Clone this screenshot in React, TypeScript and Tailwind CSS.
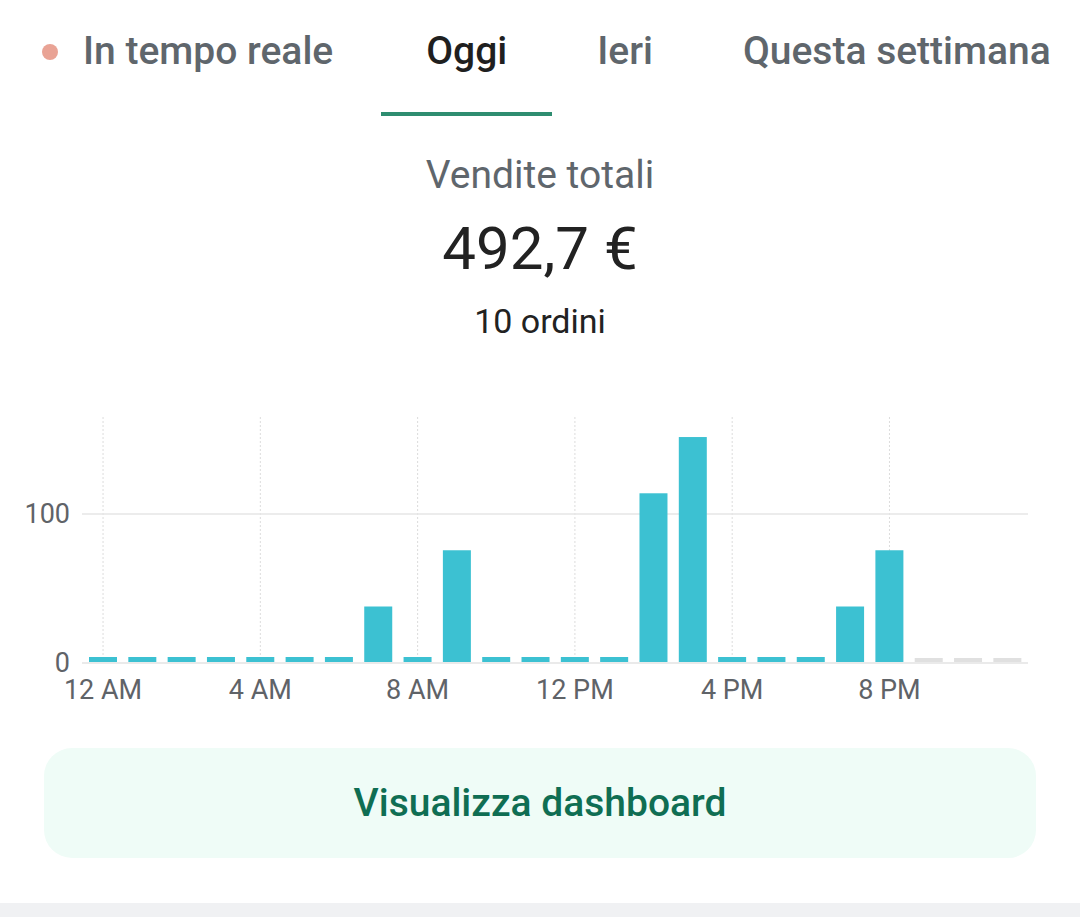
const font = { fontFamily: 'Roboto, "Noto Sans", sans-serif' };

const tabs = [
  { label: 'In tempo reale', live: true },
  { label: 'Oggi', active: true },
  { label: 'Ieri' },
  { label: 'Questa settimana' }
];

// hourly sales for today, null = not reached yet
const sales: (number | null)[] = [
  0, 0, 0, 0, 0, 0, 0, 37.5, 0, 75.5, 0, 0, 0, 0, 114, 152, 0, 0, 0, 37.5, 75.5, null, null, null
];

const X0 = 83.4;
const STEP = 39.32;
const BASE = 262;
const SCALE = 1.48;

const SalesChart = () => (
  <svg width={1080} height={310} viewBox="0 0 1080 310" className="block">
    {[0, 4, 8, 12, 16, 20].map((h) => {
      const x = X0 + (h + 0.5) * STEP;
      return (
        <line
          key={h}
          x1={x}
          x2={x}
          y1={17}
          y2={BASE}
          stroke="#dcdcdc"
          strokeWidth={1}
          strokeDasharray="2 2"
        />
      );
    })}
    <line x1={82} x2={1028} y1={114} y2={114} stroke="#e6e6e6" strokeWidth={1.5} />
    <line x1={82} x2={1028} y1={BASE + 1} y2={BASE + 1} stroke="#e3e3e3" strokeWidth={1.5} />
    {sales.map((v, i) => {
      const x = X0 + i * STEP + 5.6;
      if (v === null)
        return <rect key={i} x={x} y={BASE - 4} width={28} height={4} fill="#e0e0e0" />;
      const h = Math.max(v * SCALE, 5);
      return <rect key={i} x={x} y={BASE - h} width={28} height={h} fill="#3cc1d2" />;
    })}
    <g fill="#5f6368" fontSize={27} style={font}>
      <text x={70} y={123} textAnchor="end">
        100
      </text>
      <text x={70} y={272} textAnchor="end">
        0
      </text>
      {['12 AM', '4 AM', '8 AM', '12 PM', '4 PM', '8 PM'].map((t, k) => (
        <text key={t} x={X0 + (k * 4 + 0.5) * STEP} y={299} textAnchor="middle">
          {t}
        </text>
      ))}
    </g>
  </svg>
);

export default function App() {
  return (
    <div className="h-[917px] w-[1080px] overflow-hidden bg-white" style={font}>
      <div className="flex h-[116px] overflow-hidden whitespace-nowrap">
        {tabs.map((t, i) => (
          <div
            key={t.label}
            className={`flex h-[116px] shrink-0 items-start border-b-4 pt-[32px] text-[39px] leading-none font-medium ${
              i === 0 ? 'pl-[42px] pr-[48px]' : 'px-[45px]'
            } ${t.active ? 'border-[#2e8d70] text-[#1f1f1f]' : 'border-transparent text-[#5f666c]'}`}
          >
            {t.live && <span className="mt-[12px] mr-[25px] h-4 w-4 rounded-full bg-[#e9a395]" />}
            {t.label}
          </div>
        ))}
      </div>

      <div className="mt-[40px] flex flex-col items-center">
        <div className="text-[39px] leading-none text-[#5f666c]">Vendite totali</div>
        <div className="mt-[24px] text-[60px] leading-none text-[#222222]">492,7 €</div>
        <div className="mt-[25px] text-[34px] leading-none text-[#222222]">10 ordini</div>
      </div>

      <div className="mt-[62px]">
        <SalesChart />
      </div>

      <div className="mx-[44px] mt-[38px] flex h-[110px] items-center justify-center rounded-[28px] bg-[#effcf7]">
        <span className="text-[39px] font-medium text-[#0f6e53]">Visualizza dashboard</span>
      </div>

      <div className="mt-[45px] h-[14px] bg-[#f0f1f3]" />
    </div>
  );
}
